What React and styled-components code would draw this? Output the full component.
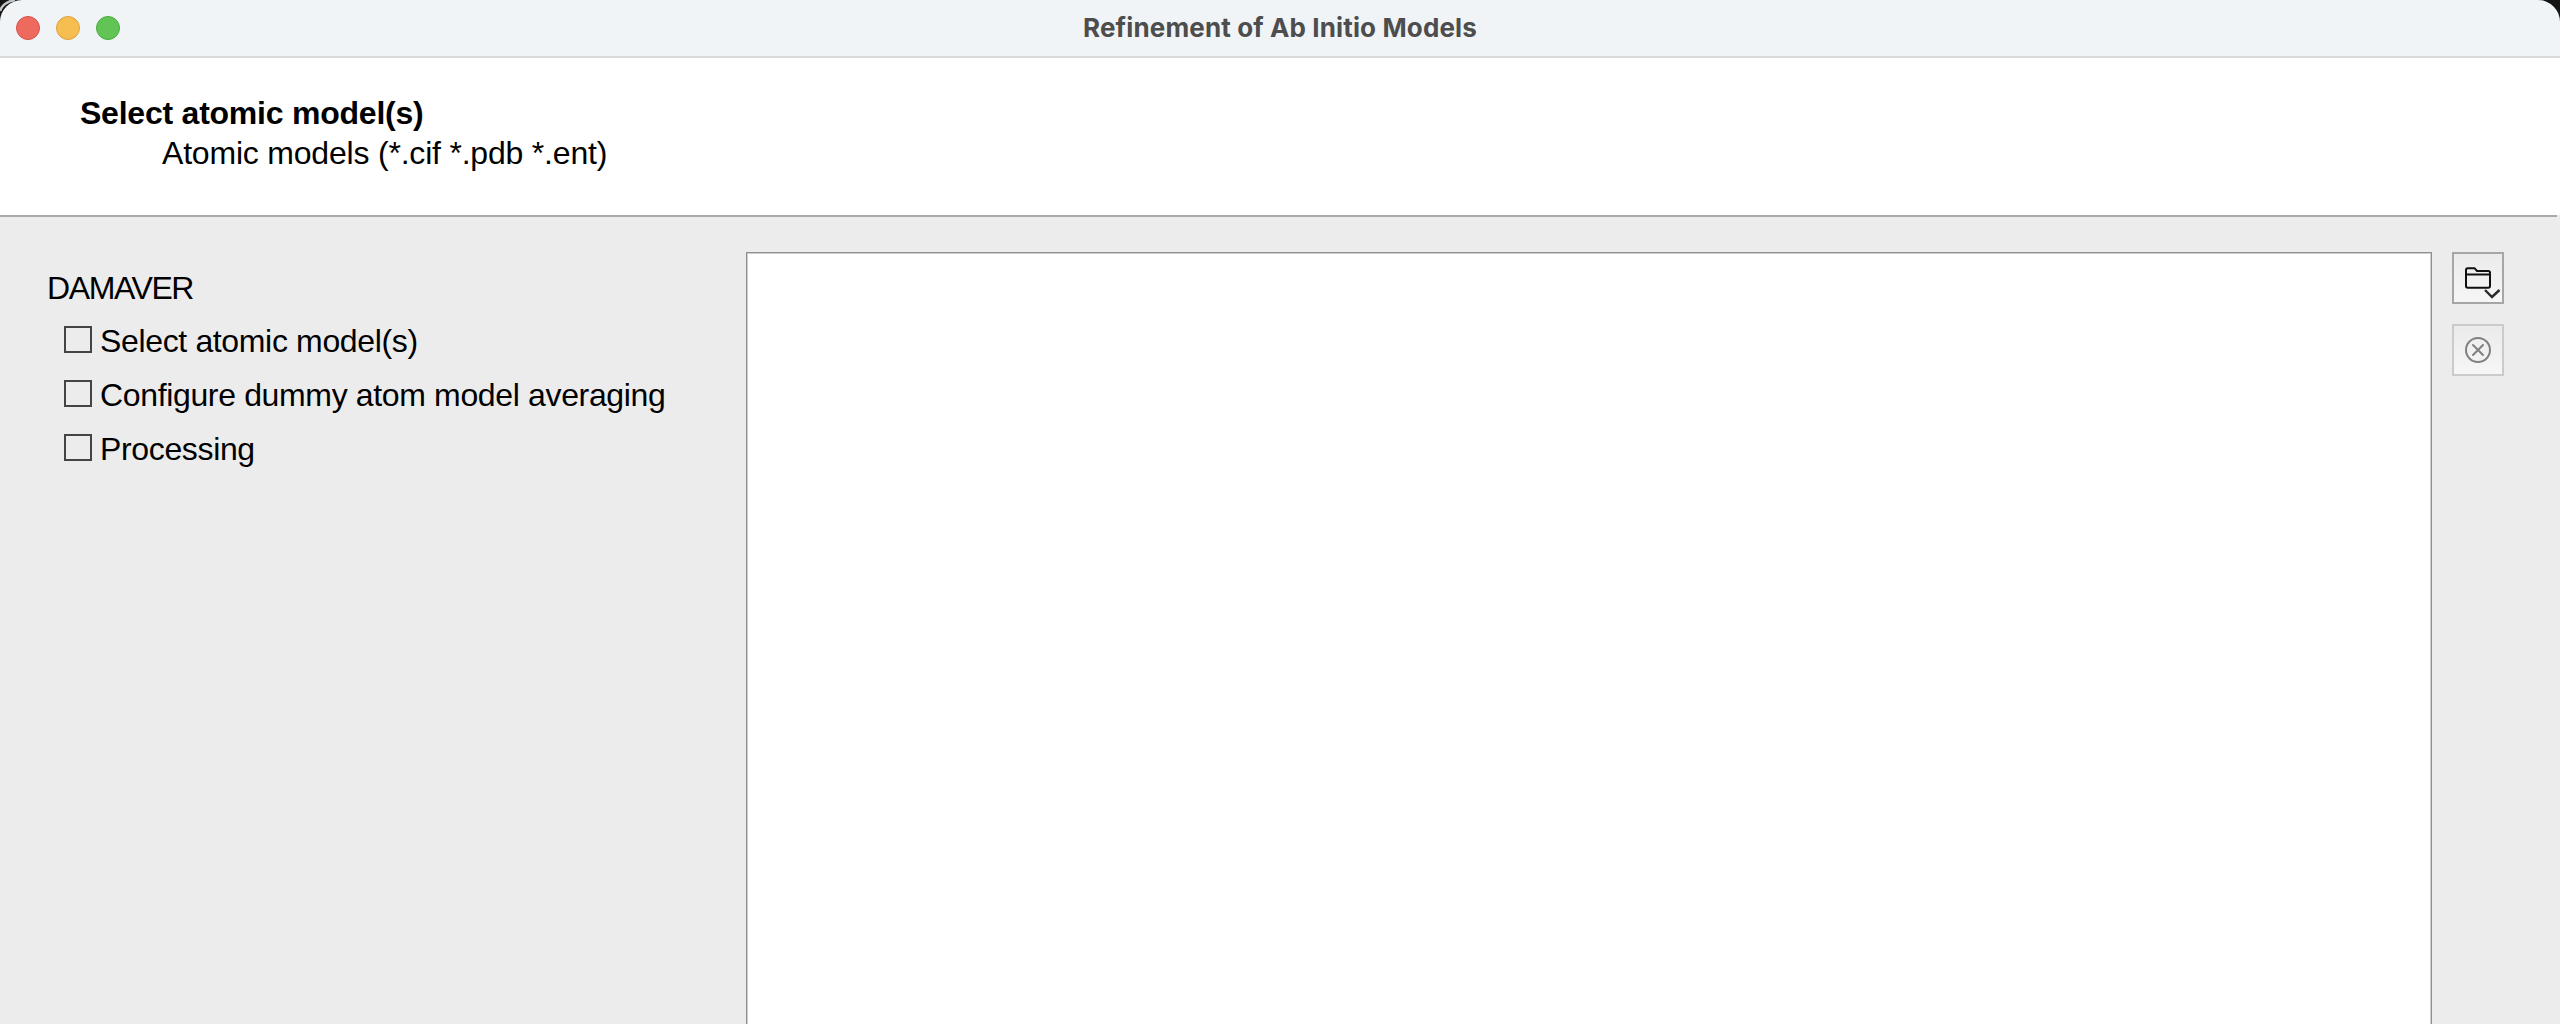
import styled, { createGlobalStyle } from 'styled-components';

const GlobalStyle = createGlobalStyle`
    html, body {
        margin: 0;
        padding: 0;
        height: 100%;
        background-color: #ececec;
        overflow: hidden;
    }
    #root {
        height: 100%;
    }
`;

const steps = ['Select atomic model(s)', 'Configure dummy atom model averaging', 'Processing'];

export default function App() {
    return (
        <Page>
            <GlobalStyle />
            <TitleBar>
                <CornerArc width="20" height="14" viewBox="0 0 20 14" fill="none" stroke="#c4c4c4" strokeWidth="2.5">
                    <path d="M0 11Q3 2 15 0" />
                </CornerArc>
                <Lights>
                    <Light $fill="#ee6a5f" $edge="#d5534a" />
                    <Light $fill="#f6be50" $edge="#dfa040" />
                    <Light $fill="#61c454" $edge="#4cab3f" />
                </Lights>
                <WindowTitle>Refinement of Ab Initio Models</WindowTitle>
            </TitleBar>
            <Header>
                <HeaderTitle>Select atomic model(s)</HeaderTitle>
                <HeaderSub>Atomic models (*.cif *.pdb *.ent)</HeaderSub>
            </Header>
            <Rule />
            <Body>
                <Sidebar>
                    <GroupName>DAMAVER</GroupName>
                    {steps.map((step) => (
                        <Step key={step}>
                            <Check />
                            <StepLabel>{step}</StepLabel>
                        </Step>
                    ))}
                </Sidebar>
                <ListBox />
                <Tools>
                    <ToolButton>
                        <svg width="48" height="48" viewBox="2 2 48 48" fill="none" stroke="#111" strokeWidth="2" strokeLinejoin="round" strokeLinecap="round">
                            <path d="M14 22V18Q14 16.2 15.8 16.2H22.5L25 19H36.2Q38 19 38 20.8V34Q38 35.8 36.2 35.8H15.8Q14 35.8 14 34Z" />
                            <path d="M14 22.4H38" />
                            <path d="M33 38L40 45L47.5 38" stroke="#2a2a2a" strokeWidth="2.4" strokeLinecap="butt" strokeLinejoin="miter" />
                        </svg>
                    </ToolButton>
                    <ToolButton $disabled>
                        <svg width="48" height="48" viewBox="2 2 48 48" fill="none" stroke="#808080" strokeWidth="2" strokeLinecap="round">
                            <circle cx="26" cy="26" r="12" />
                            <path d="M21 21L31 31M31 21L21 31" />
                        </svg>
                    </ToolButton>
                </Tools>
            </Body>
        </Page>
    );
}

const Page = styled.div`
    width: 2560px;
    height: 1024px;
    display: flex;
    flex-direction: column;
    overflow: hidden;
    background-color: #ececec;
    font-family: "Liberation Sans", Arial, sans-serif;
    color: #000;
`;

const TitleBar = styled.div`
    position: relative;
    flex: none;
    height: 56px;
    box-sizing: content-box;
    display: flex;
    align-items: center;
    justify-content: center;
    background-color: #f0f4f7;
    border-bottom: 2px solid #d9dadb;
    border-radius: 22px 22px 0 0;
    box-shadow: -22px -22px 0 22px #141414;
`;

const CornerArc = styled.svg`
    position: absolute;
    left: 0;
    top: 0;
`;

const Lights = styled.div`
    position: absolute;
    left: 16px;
    top: 16px;
    display: flex;
    gap: 16px;
`;

const Light = styled.div`
    width: 24px;
    height: 24px;
    box-sizing: border-box;
    border-radius: 50%;
    background-color: ${(props) => props.$fill};
    border: 1px solid ${(props) => props.$edge};
`;

const WindowTitle = styled.div`
    font-family: Inter, sans-serif;
    font-size: 26px;
    font-weight: 700;
    color: #4d4d4d;
    letter-spacing: 0.13px;
    margin-bottom: 2px;
`;

const Header = styled.div`
    flex: none;
    height: 157px;
    box-sizing: border-box;
    padding: 35px 0 0 80px;
    background-color: #fff;
`;

const HeaderTitle = styled.div`
    font-size: 32px;
    line-height: 40px;
    font-weight: 700;
    letter-spacing: -0.23px;
`;

const HeaderSub = styled.div`
    font-size: 32px;
    line-height: 41px;
    margin-left: 82px;
    letter-spacing: -0.2px;
`;

const Rule = styled.div`
    flex: none;
    width: 2557px;
    height: 2px;
    background-color: #a9a9a9;
`;

const Body = styled.div`
    flex: 1;
    display: flex;
    align-items: stretch;
    padding-top: 35px;
    background-color: #ececec;
`;

const Sidebar = styled.div`
    flex: none;
    width: 746px;
    box-sizing: border-box;
    padding: 16px 0 0 47px;
`;

const GroupName = styled.div`
    font-size: 32px;
    line-height: 40px;
    margin-bottom: 12px;
    letter-spacing: -1.4px;
`;

const Step = styled.div`
    display: flex;
    align-items: center;
    height: 40px;
    margin: 0 0 14px 17px;
    font-size: 32px;
    line-height: 40px;
    letter-spacing: -0.35px;
`;

const StepLabel = styled.span`
    margin-top: 2px;
`;

const Check = styled.div`
    flex: none;
    width: 28px;
    height: 27px;
    box-sizing: border-box;
    margin: -1px 8px 0 0;
    border: 2px solid #444;
`;

const ListBox = styled.div`
    flex: none;
    width: 1686px;
    box-sizing: border-box;
    background-color: #fff;
    border: 1px solid #8f8f8f;
    border-bottom: none;
    box-shadow: inset 1px 1px 0 #cfcfcf, inset -1px 0 0 #cfcfcf;
`;

const Tools = styled.div`
    flex: none;
    margin-left: 20px;
    display: flex;
    flex-direction: column;
    gap: 20px;
`;

const ToolButton = styled.div`
    width: 52px;
    height: 52px;
    box-sizing: border-box;
    display: flex;
    align-items: center;
    justify-content: center;
    border: 2px solid ${(props) => (props.$disabled ? '#cbcbcb' : '#a6a6a6')};
    background: linear-gradient(#ebebeb, #f6f6f6);
    svg {
        overflow: visible;
    }
`;
